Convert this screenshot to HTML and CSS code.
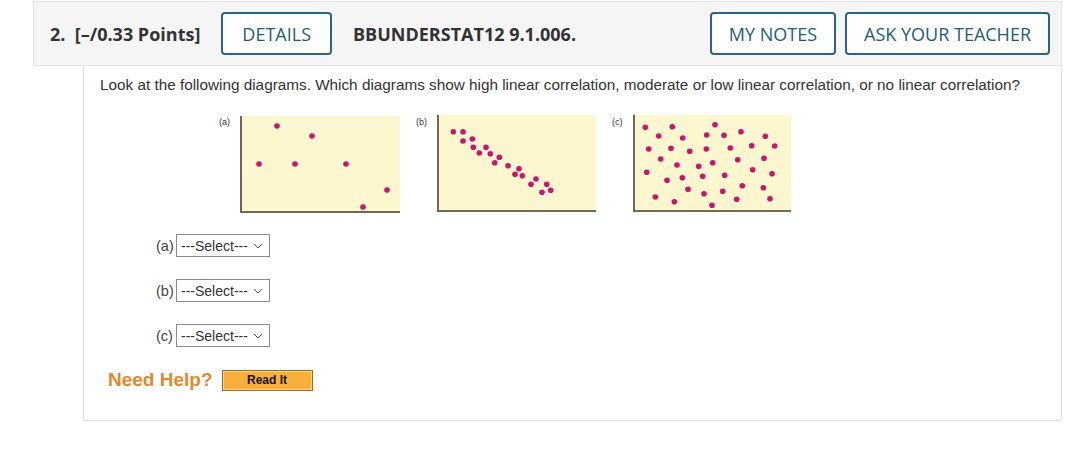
FILE: index.html
```html
<!DOCTYPE html>
<html>
<head>
<meta charset="utf-8">
<link rel="stylesheet" href="styles.css">
</head>
<body>
<div class="question">
  <div class="qhead">
    <span class="qnum">2.&nbsp; [–/0.33 Points]</span>
    <button class="btn btn-details">DETAILS</button>
    <span class="qid">BBUNDERSTAT12 9.1.006.</span>
    <span class="spacer"></span>
    <button class="btn">MY NOTES</button>
    <button class="btn">ASK YOUR TEACHER</button>
  </div>
  <div class="qbody">
    <p class="prompt">Look at the following diagrams. Which diagrams show high linear correlation, moderate or low linear correlation, or no linear correlation?</p>
    <div class="figs">
      <div class="fig">
        <span class="flabel">(a)</span>
        <svg class="plot" width="160" height="98" viewBox="0 0 160 98">
          <rect x="0" y="1" width="160" height="96" fill="#fdf7cf"/>
          <path d="M1 1 V97 H160" fill="none" stroke="#6f6a55" stroke-width="2"/>
          <g fill="#c9156b">
            <circle cx="37" cy="11" r="2.8"/><circle cx="72" cy="21" r="2.8"/>
            <circle cx="19" cy="49" r="2.8"/><circle cx="55" cy="49" r="2.8"/>
            <circle cx="106" cy="49" r="2.8"/><circle cx="147" cy="75" r="2.8"/>
            <circle cx="123" cy="92" r="2.8"/>
          </g>
        </svg>
      </div>
      <div class="fig">
        <span class="flabel">(b)</span>
        <svg class="plot" width="159" height="98" viewBox="0 0 159 98">
          <rect x="0" y="0" width="159" height="96" fill="#fdf7cf"/>
          <path d="M1 0 V96 H159" fill="none" stroke="#6f6a55" stroke-width="2"/>
          <g fill="#c9156b">
            <circle cx="16.3" cy="16.7" r="2.8"/><circle cx="26" cy="16.7" r="2.8"/>
            <circle cx="26" cy="26" r="2.8"/><circle cx="35.3" cy="24" r="2.8"/>
            <circle cx="36.3" cy="32.3" r="2.8"/><circle cx="49" cy="32.3" r="2.8"/>
            <circle cx="42.3" cy="38" r="2.8"/><circle cx="53.3" cy="38.7" r="2.8"/>
            <circle cx="62.3" cy="42.3" r="2.8"/><circle cx="57.7" cy="47.7" r="2.8"/>
            <circle cx="71" cy="50.7" r="2.8"/><circle cx="82" cy="53.7" r="2.8"/>
            <circle cx="78" cy="59.3" r="2.8"/><circle cx="85.3" cy="60.7" r="2.8"/>
            <circle cx="99" cy="64" r="2.8"/><circle cx="94" cy="69.3" r="2.8"/>
            <circle cx="109.7" cy="69.3" r="2.8"/><circle cx="105" cy="77.3" r="2.8"/>
            <circle cx="113.7" cy="75.3" r="2.8"/>
          </g>
        </svg>
      </div>
      <div class="fig">
        <span class="flabel">(c)</span>
        <svg class="plot" width="158" height="98" viewBox="0 0 158 98">
          <rect x="0" y="0" width="158" height="96" fill="#fdf7cf"/>
          <path d="M1 0 V96 H158" fill="none" stroke="#6f6a55" stroke-width="2"/>
          <g fill="#c9156b">
            <circle cx="12.3" cy="12.3" r="2.8"/><circle cx="39.3" cy="11.7" r="2.8"/>
            <circle cx="82" cy="9.7" r="2.8"/><circle cx="25.7" cy="21" r="2.8"/>
            <circle cx="49.7" cy="23" r="2.8"/><circle cx="73.7" cy="20" r="2.8"/>
            <circle cx="91" cy="20.3" r="2.8"/><circle cx="108" cy="16.7" r="2.8"/>
            <circle cx="132.3" cy="21.3" r="2.8"/><circle cx="15.7" cy="34" r="2.8"/>
            <circle cx="38" cy="33.3" r="2.8"/><circle cx="56.7" cy="36.3" r="2.8"/>
            <circle cx="73.3" cy="34" r="2.8"/><circle cx="97.3" cy="33" r="2.8"/>
            <circle cx="118.7" cy="30.7" r="2.8"/><circle cx="141.7" cy="31" r="2.8"/>
            <circle cx="27.7" cy="44" r="2.8"/><circle cx="44" cy="50" r="2.8"/>
            <circle cx="65.7" cy="51.3" r="2.8"/><circle cx="79.7" cy="47.7" r="2.8"/>
            <circle cx="104.7" cy="44.7" r="2.8"/><circle cx="131" cy="43.3" r="2.8"/>
            <circle cx="13.7" cy="57.3" r="2.8"/><circle cx="34" cy="65.3" r="2.8"/>
            <circle cx="49.3" cy="62.7" r="2.8"/><circle cx="69.7" cy="61.3" r="2.8"/>
            <circle cx="91.7" cy="60.3" r="2.8"/><circle cx="119.7" cy="54.7" r="2.8"/>
            <circle cx="139" cy="58.7" r="2.8"/><circle cx="55" cy="74.3" r="2.8"/>
            <circle cx="71" cy="78.7" r="2.8"/><circle cx="89.7" cy="76.3" r="2.8"/>
            <circle cx="109.3" cy="70.7" r="2.8"/><circle cx="130.3" cy="72.7" r="2.8"/>
            <circle cx="22.3" cy="82" r="2.8"/><circle cx="41.3" cy="86.7" r="2.8"/>
            <circle cx="79" cy="90.3" r="2.8"/><circle cx="103.7" cy="84.3" r="2.8"/>
            <circle cx="137" cy="83.7" r="2.8"/>
          </g>
        </svg>
      </div>
    </div>
    <div class="answers">
      <div class="arow"><span class="alabel">(a)</span><div class="select"><span>---Select---</span><svg width="10" height="6" viewBox="0 0 10 6"><path d="M1 1 L5 5 L9 1" fill="none" stroke="#555" stroke-width="1"/></svg></div></div>
      <div class="arow"><span class="alabel">(b)</span><div class="select"><span>---Select---</span><svg width="10" height="6" viewBox="0 0 10 6"><path d="M1 1 L5 5 L9 1" fill="none" stroke="#555" stroke-width="1"/></svg></div></div>
      <div class="arow"><span class="alabel">(c)</span><div class="select"><span>---Select---</span><svg width="10" height="6" viewBox="0 0 10 6"><path d="M1 1 L5 5 L9 1" fill="none" stroke="#555" stroke-width="1"/></svg></div></div>
    </div>
    <div class="help">
      <span class="needhelp">Need Help?</span>
      <span class="readit">Read It</span>
    </div>
  </div>
</div>
</body>
</html>
```
FILE: styles.css
```css
html, body {
  margin: 0;
  padding: 0;
  background: #fff;
}
.question {
  margin: 1px 0 0 33px;
  width: 1029px;
}
.qhead {
  display: flex;
  align-items: center;
  height: 65px;
  box-sizing: border-box;
  background: #f5f5f5;
  border: 1px solid #e4e4e4;
  padding: 0 11px 0 16px;
  font-family: "Open Sans", sans-serif;
  color: #333;
}
.qnum {
  font-weight: 700;
  font-size: 18px;
  margin-right: 21px;
}
.qid {
  font-weight: 700;
  font-size: 18px;
  margin-left: 21px;
}
.spacer { flex: 1; }
.btn {
  font-family: "Open Sans", sans-serif;
  font-size: 18px;
  color: #1f5b78;
  background: #fff;
  border: 2px solid #2a6683;
  border-radius: 4px;
  height: 43px;
  padding: 0 17px;
  margin-left: 9px;
  letter-spacing: 0;
}
.btn-details { margin-left: 0; padding: 0 19px; }
.qbody {
  margin-left: 50px;
  border: 1px solid #e2e2e2;
  border-top: none;
  border-radius: 0 0 4px 0;
  padding: 9px 16px 29px 16px;
  font-family: "Liberation Sans", Arial, sans-serif;
  color: #333;
}
.prompt {
  margin: 0;
  font-size: 15.3px;
  line-height: 20px;
}
.figs {
  display: flex;
  gap: 16px;
  margin: 20px 0 0 119px;
}
.fig {
  display: flex;
  align-items: flex-start;
}
.flabel {
  width: 21px;
  font-size: 9px;
  line-height: 10px;
  margin-top: 2px;
  color: #333;
}
.plot { display: block; }
.answers {
  display: flex;
  flex-direction: column;
  gap: 22px;
  margin: 21px 0 0 56px;
}
.arow {
  display: flex;
  align-items: center;
  font-size: 14.5px;
  color: #444;
}
.alabel { width: 20px; }
.select {
  display: flex;
  align-items: center;
  justify-content: space-between;
  width: 94px;
  height: 23px;
  box-sizing: border-box;
  border: 1px solid #8a8a8a;
  padding: 0 6px 0 4px;
  color: #333;
  font-size: 14px;
}
.help {
  display: flex;
  align-items: center;
  gap: 9px;
  margin: 22px 0 0 8px;
}
.needhelp {
  font-weight: 700;
  font-size: 19px;
  color: #e08a2c;
}
.readit {
  display: flex;
  align-items: center;
  justify-content: center;
  width: 91px;
  height: 21px;
  box-sizing: border-box;
  border: 1px solid #9c6b24;
  box-shadow: inset 0 0 0 1px #ffd57f;
  background: #f7b03c;
  font-weight: 700;
  font-size: 12px;
  color: #111;
}
```
